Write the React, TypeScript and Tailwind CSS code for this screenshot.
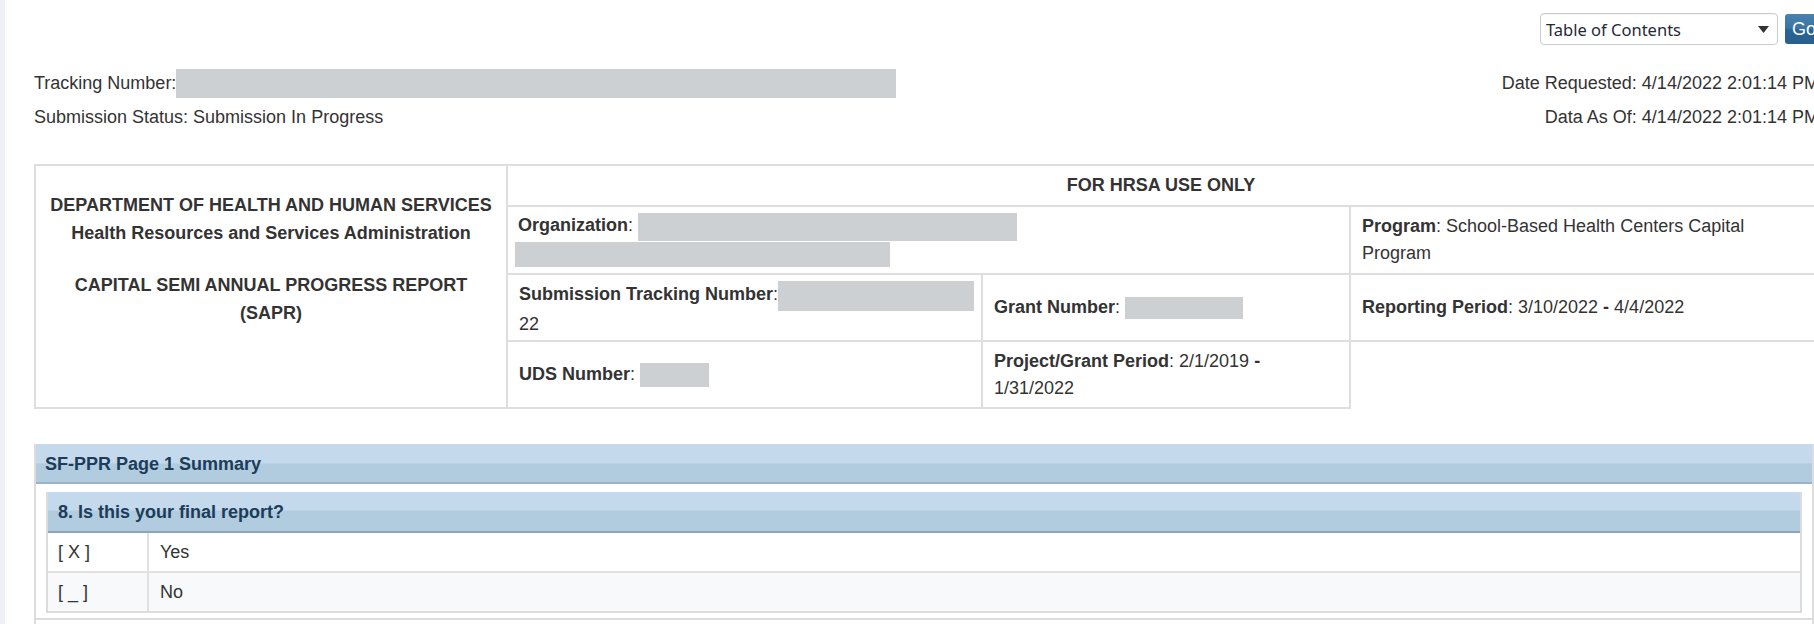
import React from "react";

const cell = "border-2 border-[#dedede] px-[11px] py-0 align-middle";

function Redacted({ w, h }: { w: number; h: number }) {
  return (
    <span
      className="inline-block bg-[#cdd0d3] align-middle"
      style={{ width: w, height: h }}
    />
  );
}

function HeaderBar({ children }: { children: React.ReactNode }) {
  return (
    <div className="flex h-[40px] items-center bg-[linear-gradient(#c4d9ec_0%,#c4d9ec_47%,#b1cbdf_50%,#b1cbdf_94%,#9cb2c5_95%,#9cb2c5_100%)] px-[9px] font-bold text-[#1c3d5a]">
      {children}
    </div>
  );
}

export default function App() {
  return (
    <div className="flex h-[624px] w-[1814px] overflow-hidden bg-white font-['Liberation_Sans',Arial,sans-serif] text-[18px] leading-[27px] text-[#333]">
      <div className="w-[5px] shrink-0 bg-[#eef1f5]" />
      <div className="ml-[29px] w-[1780px] shrink-0 pt-[13px]">
        {/* top controls */}
        <div className="-mr-[15px] flex justify-end gap-[7px]">
          <div className="flex h-[32px] w-[238px] items-center justify-between rounded-[4px] border border-[#c9cdd2] bg-white pl-[5px] pr-[8px] font-['Noto_Sans',sans-serif] text-[16.5px] text-[#1f2a36] shadow-[inset_0_1px_1px_rgba(0,0,0,0.05)]">
            <span>Table of Contents</span>
            <svg width="11" height="7" viewBox="0 0 11 7">
              <path d="M0 0 L11 0 L5.5 7 Z" fill="#333" />
            </svg>
          </div>
          <button className="h-[30px] w-[44px] self-center rounded-[3px] bg-[linear-gradient(#4a82ae_0%,#3b74a2_48%,#2a6494_52%,#28608f_100%)] pl-[7px] text-left text-[18px] text-white">
            Go
          </button>
        </div>

        {/* tracking info */}
        <div className="mt-[21px] flex h-[34px] items-center justify-between">
          <div className="flex items-center">
            <span>Tracking Number:</span>
            <span className="inline-block h-[29px] w-[720px] bg-[#cdd0d3]" />
          </div>
          <span className="-mr-[5px]">Date Requested: 4/14/2022 2:01:14 PM</span>
        </div>
        <div className="flex h-[34px] items-center justify-between">
          <span>Submission Status: Submission In Progress</span>
          <span className="-mr-[5px]">Data As Of: 4/14/2022 2:01:14 PM</span>
        </div>

        {/* report header table */}
        <table className="mt-[30px] w-full table-fixed border-collapse">
          <colgroup>
            <col className="w-[472px]" />
            <col className="w-[475px]" />
            <col className="w-[368px]" />
            <col className="w-[465px]" />
          </colgroup>
          <tbody>
            <tr className="h-[41px]">
              <td
                rowSpan={4}
                className="border-2 border-[#dedede] px-[4px] pt-[25px] text-center align-top font-bold leading-[28px]"
              >
                DEPARTMENT OF HEALTH AND HUMAN SERVICES
                <br />
                Health Resources and Services Administration
                <br />
                <span className="block h-[24px]" />
                CAPITAL SEMI ANNUAL PROGRESS REPORT
                <br />
                (SAPR)
              </td>
              <td colSpan={3} className={`${cell} text-center font-bold`}>
                FOR HRSA USE ONLY
              </td>
            </tr>
            <tr className="h-[68px]">
              <td colSpan={2} className={`${cell} !pl-[7px]`}>
                <span className="pl-[3px]">
                  <b>Organization</b>:{" "}
                </span>
                <Redacted w={379} h={28} />
                <br />
                <Redacted w={375} h={25} />
              </td>
              <td className={cell}>
                <b>Program</b>: School-Based Health Centers Capital
                <br />
                Program
              </td>
            </tr>
            <tr className="h-[67px]">
              <td className={`${cell} !pr-[4px] pt-[3px]`}>
                <span className="whitespace-nowrap">
                  <b>Submission Tracking Number</b>:<Redacted w={196} h={30} />
                </span>
                <br />
                22
              </td>
              <td className={cell}>
                <b>Grant Number</b>: <Redacted w={118} h={22} />
              </td>
              <td className={cell}>
                <b>Reporting Period</b>: 3/10/2022 <b>-</b> 4/4/2022
              </td>
            </tr>
            <tr className="h-[67px]">
              <td className={cell}>
                <b>UDS Number</b>: <Redacted w={69} h={24} />
              </td>
              <td className={cell}>
                <b>Project/Grant Period</b>: 2/1/2019 <b>-</b>
                <br />
                1/31/2022
              </td>
              <td className="border-0 border-t-2 border-t-[#dedede]" />
            </tr>
          </tbody>
        </table>

        {/* SF-PPR summary section */}
        <div className="mt-[35px] border-2 border-b-0 border-[#dcdcdc]">
          <div className="-mt-[2px]">
            <HeaderBar>SF-PPR Page 1 Summary</HeaderBar>
          </div>
          <div className="px-[10px] pb-[5px] pt-[8px]">
            <div className="border-2 border-[#dcdcdc]">
              <div className="-mt-[2px]">
                <div className="flex h-[41px] items-center bg-[linear-gradient(#c4d9ec_0%,#c4d9ec_44%,#b1cbdf_47%,#b1cbdf_94%,#8ea4b7_95%,#8ea4b7_100%)] px-[10px] font-bold text-[#1c3d5a]">
                  8. Is this your final report?
                </div>
              </div>
              <div className="flex h-[40px] items-center border-b-2 border-[#e1e1e1] bg-white">
                <div className="flex h-full w-[101px] shrink-0 items-center border-r-2 border-[#e1e1e1] pl-[10px]">
                  [ X ]
                </div>
                <div className="pl-[11px]">Yes</div>
              </div>
              <div className="flex h-[38px] items-center bg-[#f8f9fb]">
                <div className="flex h-full w-[101px] shrink-0 items-center border-r-2 border-[#e1e1e1] pl-[10px]">
                  [ _ ]
                </div>
                <div className="pl-[11px]">No</div>
              </div>
            </div>
          </div>
          <div className="h-[10px] border-t-2 border-[#dcdcdc]" />
        </div>
      </div>
    </div>
  );
}
